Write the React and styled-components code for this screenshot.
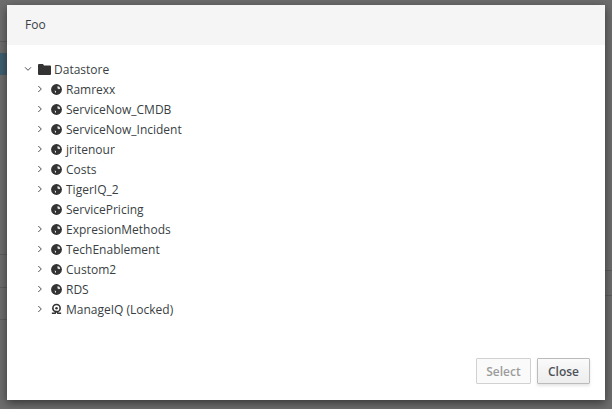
import React from "react";
import styled, { createGlobalStyle } from "styled-components";

const Global = createGlobalStyle`
  html, body { margin: 0; padding: 0; background: #6d6d6d; }
  #root { width: 612px; height: 409px; overflow: hidden; }
  * { box-sizing: border-box; }
`;

const Backdrop = styled.div`
  position: relative;
  width: 612px;
  height: 409px;
  padding: 5px 7px 9px 7px;
  background: #6d6d6d;
  font-family: "Open Sans", "Liberation Sans", sans-serif;
`;

const Stripe = styled.div`
  position: absolute;
  left: ${p => p.$left}px;
  width: ${p => p.$width}px;
  top: ${p => p.$top}px;
  height: ${p => p.$height}px;
  background: ${p => p.$color};
`;

const Modal = styled.div`
  position: relative;
  height: 100%;
  display: flex;
  flex-direction: column;
  background: #fff;
  box-shadow: 0 3px 9px rgba(0, 0, 0, 0.5);
`;

const Header = styled.div`
  height: 40px;
  flex: none;
  display: flex;
  align-items: center;
  padding: 0 0 2px 18px;
  background: #f5f5f5;
  color: #393f44;
  font-size: 12px;
`;

const Body = styled.div`
  flex: 1;
  padding: 14px 0 0 15px;
`;

const TreeRow = styled.div`
  height: 20px;
  display: flex;
  align-items: center;
  padding-left: ${p => p.$indent}px;
  color: #393f44;
  font-size: 12px;
  white-space: nowrap;
`;

const Toggle = styled.span`
  width: 12px;
  height: 12px;
  flex: none;
  display: flex;
  align-items: center;
  justify-content: center;
  margin-right: ${p => p.$gap}px;
`;

const NodeIcon = styled.span`
  width: ${p => p.$size}px;
  height: 12px;
  flex: none;
  display: flex;
  align-items: center;
  justify-content: center;
  margin-right: ${p => p.$gap}px;
`;

const Footer = styled.div`
  flex: none;
  display: flex;
  justify-content: flex-end;
  gap: 6px;
  padding: 0 15px 16px 0;
`;

const Button = styled.button`
  height: 26px;
  width: ${p => p.$width}px;
  padding: 0;
  font-family: inherit;
  font-size: 12px;
  font-weight: 600;
  border-radius: 1px;
  border: 1px solid ${p => (p.$disabled ? "#d1d1d1" : "#bbb")};
  color: ${p => (p.$disabled ? "#9c9c9c" : "#4d5258")};
  background: ${p => (p.$disabled ? "#fafafa" : "linear-gradient(#fafafa, #ededed)")};
  box-shadow: ${p => (p.$disabled ? "none" : "0 2px 3px rgba(3, 3, 3, 0.1)")};
`;

const Chevron = ({ open }) => (
  <svg width="8" height="8" viewBox="0 0 8 8" fill="none" stroke="#4d5258" strokeWidth="1">
    {open ? <path d="M1 2.3 L4 5.3 L7 2.3" /> : <path d="M2.3 1 L5.3 4 L2.3 7" />}
  </svg>
);

const Folder = () => (
  <svg width="13" height="11" viewBox="0 0 13 11">
    <path d="M0 1 Q0 0 1 0 H5 L6 1.5 H12 Q13 1.5 13 2.5 V10 Q13 11 12 11 H1 Q0 11 0 10 Z" fill="#333" />
  </svg>
);

const Globe = () => (
  <svg width="11" height="11" viewBox="0 0 11 11">
    <circle cx="5.5" cy="5.5" r="5.4" fill="#333" />
    <path d="M6.6 2 L8.6 3 L9.2 4.8 L8 5.2 L6.4 4.2 Z M3.6 6.6 L5 7 L5 9 L4.3 8.6 Z" fill="#e8e8e8" />
  </svg>
);

const Lock = () => (
  <svg width="13" height="12" viewBox="0 0 13 12" fill="none">
    <circle cx="6.5" cy="5" r="4.3" stroke="#333" strokeWidth="1.9" />
    <circle cx="6.5" cy="5" r="1.5" fill="#333" />
    <path d="M1 11 H5 L5.6 9 H7.4 L8 11 H12" stroke="#333" strokeWidth="1.6" />
  </svg>
);

const items = [
  ["Ramrexx", true],
  ["ServiceNow_CMDB", true],
  ["ServiceNow_Incident", true],
  ["jritenour", true],
  ["Costs", true],
  ["TigerIQ_2", true],
  ["ServicePricing", false],
  ["ExpresionMethods", true],
  ["TechEnablement", true],
  ["Custom2", true],
  ["RDS", true],
];

export default function App() {
  return (
    <>
      <Global />
      <Backdrop>
        <Stripe $left={0} $width={7} $top={53} $height={22} $color="#3f5f6f" />
        <Stripe $left={0} $width={7} $top={41} $height={1} $color="#5d5d5d" />
        <Stripe $left={0} $width={7} $top={254} $height={1} $color="#5d5d5d" />
        <Stripe $left={0} $width={7} $top={287} $height={1} $color="#5d5d5d" />
        <Stripe $left={0} $width={7} $top={319} $height={1} $color="#5d5d5d" />
        <Stripe $left={605} $width={7} $top={270} $height={1} $color="#5d5d5d" />
        <Stripe $left={605} $width={7} $top={295} $height={1} $color="#5d5d5d" />
        <Modal>
          <Header>Foo</Header>
          <Body>
            <TreeRow $indent={0}>
              <Toggle $gap={4}><Chevron open /></Toggle>
              <NodeIcon $size={13} $gap={3}><Folder /></NodeIcon>
              Datastore
            </TreeRow>
            {items.map(([name, expandable]) => (
              <TreeRow key={name} $indent={12}>
                <Toggle $gap={5}>{expandable && <Chevron />}</Toggle>
                <NodeIcon $size={11} $gap={4}><Globe /></NodeIcon>
                {name}
              </TreeRow>
            ))}
            <TreeRow $indent={12}>
              <Toggle $gap={5}><Chevron /></Toggle>
              <NodeIcon $size={11} $gap={4}><Lock /></NodeIcon>
              ManageIQ (Locked)
            </TreeRow>
          </Body>
          <Footer>
            <Button $disabled $width={55} disabled>Select</Button>
            <Button $width={53}>Close</Button>
          </Footer>
        </Modal>
      </Backdrop>
    </>
  );
}
